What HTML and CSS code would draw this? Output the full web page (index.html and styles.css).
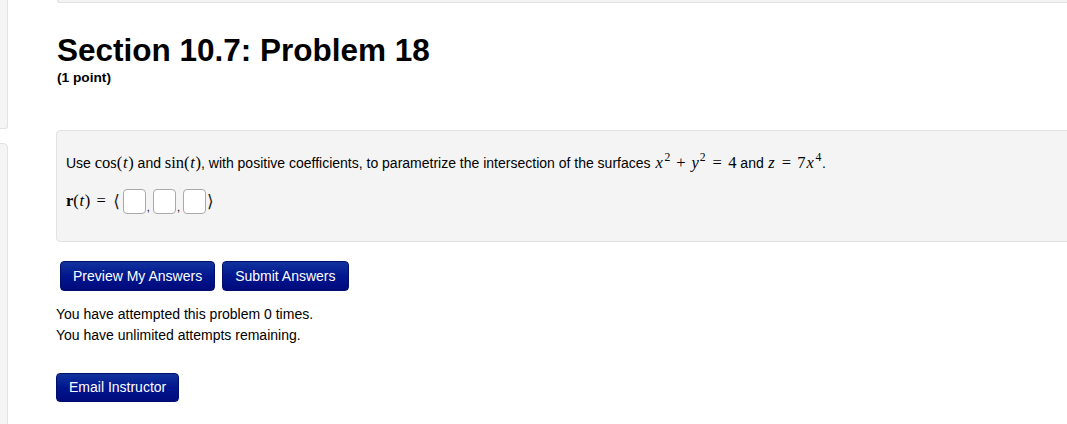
FILE: index.html
```html
<!DOCTYPE html>
<html lang="en">
<head>
<meta charset="utf-8">
<title>Section 10.7: Problem 18</title>
<link rel="stylesheet" href="styles.css">
</head>
<body>
<div class="page">
  <aside class="side">
    <div class="side-panel side-top"></div>
    <div class="side-panel side-bottom"></div>
  </aside>
  <main class="main">
    <div class="top-well"></div>
    <h1 class="title">Section 10.7: Problem 18</h1>
    <div class="points">(1 point)</div>

    <div class="problem">
      <p class="statement">Use <span class="m"><span class="rm">cos</span><span class="pa">(</span><i class="mi t">t</i><span class="pa">)</span></span> and <span class="m"><span class="rm">sin</span><span class="pa">(</span><i class="mi t">t</i><span class="pa">)</span></span>, with positive coefficients, to parametrize the intersection of the surfaces <span class="m"><i class="mi x">x</i><sup>2</sup><span class="bin">+</span><i class="mi y">y</i><sup>2</sup><span class="rel">=</span>4</span> and <span class="m"><i class="mi z">z</i><span class="rel">=</span>7<i class="mi x">x</i><sup>4</sup></span>.</p>
      <div class="answer-row">
        <span class="m"><b class="bold">r</b><span class="pa">(</span><i class="mi t">t</i><span class="pa">)</span><span class="rel">=</span></span><span class="angle">⟨</span><span class="ans"></span><span class="comma">,</span><span class="ans"></span><span class="comma">,</span><span class="ans"></span><span class="angle">⟩</span>
      </div>
    </div>

    <div class="submit-row">
      <button class="btn">Preview My Answers</button>
      <button class="btn">Submit Answers</button>
    </div>

    <div class="attempts">
      <div>You have attempted this problem 0 times.</div>
      <div>You have unlimited attempts remaining.</div>
    </div>

    <button class="btn email">Email Instructor</button>
  </main>
</div>
</body>
</html>
```

FILE: styles.css
```css
html, body {
  margin: 0;
  padding: 0;
  background: #ffffff;
  overflow: hidden;
}
body {
  font-family: "Liberation Sans", Arial, sans-serif;
  font-size: 14px;
  line-height: 20px;
  color: #000;
  height: 424px;
}
.page {
  display: flex;
  height: 424px;
}
.side {
  width: 8px;
  flex: none;
  display: flex;
  flex-direction: column;
  gap: 14px;
}
.side-panel {
  background: #f5f5f5;
  border: 1px solid #e3e3e3;
  border-left: none;
  box-sizing: border-box;
}
.side-top {
  height: 129px;
  border-top: none;
  border-radius: 0 0 3px 0;
}
.side-bottom {
  flex: 1;
  border-bottom: none;
  border-radius: 0 5px 0 0;
}
.main {
  flex: 1;
  min-width: 0;
  padding-left: 48px;
}
.top-well {
  height: 3px;
  margin-left: 1px;
  margin-right: -10px;
  background: #f3f3f3;
  border-bottom: 1px solid #e0e0e0;
  border-left: 1px solid #e0e0e0;
  border-radius: 0 0 0 4px;
  box-sizing: border-box;
}
.title {
  font-size: 31.5px;
  line-height: 36px;
  font-weight: bold;
  margin: 29px 0 0 1px;
}
.points {
  font-size: 13.7px;
  font-weight: bold;
  line-height: 17px;
  margin: 1px 0 0 1px;
}
.problem {
  margin-top: 44px;
  margin-right: -10px;
  background: #f4f4f4;
  border: 1px solid #e2e2e2;
  border-radius: 4px;
  padding: 22px 9px 27px;
}
.statement {
  margin: 0;
  line-height: 20px;
}
.m {
  font-family: "Liberation Serif", "DejaVu Serif", serif;
  font-size: 16.5px;
  line-height: 1;
  white-space: nowrap;
}
.mi {
  display: inline-block;
  font-style: italic;
  text-align: center;
}
.mi.t { width: 0.36em; }
.mi.x { width: 0.57em; }
.mi.y { width: 0.5em; }
.mi.z { width: 0.47em; }
.pa {
  display: inline-block;
  width: 0.333em;
  text-align: center;
}
.bin {
  display: inline-block;
  width: 0.778em;
  margin: 0 0.222em;
  text-align: center;
}
.rel {
  display: inline-block;
  width: 0.778em;
  margin: 0 0.278em;
  text-align: center;
}
.m sup {
  font-size: 11.7px;
  vertical-align: 7px;
  line-height: 0;
  padding: 0 0.05em 0 0.05em;
}
.rm {
  font-style: normal;
}
.answer-row {
  margin-top: 16px;
  display: flex;
  align-items: center;
  height: 25px;
}
.bold {
  font-weight: bold;
}
.angle {
  font-family: "DejaVu Sans", sans-serif;
  font-size: 17px;
  line-height: 1;
  color: #222;
  margin: 0 3px 0 1px;
}
.ans {
  width: 23px;
  height: 25px;
  box-sizing: border-box;
  background: #fff;
  border: 1px solid #a9a9a9;
  border-radius: 4px;
}
.comma {
  align-self: flex-end;
  font-size: 11px;
  line-height: 14px;
  margin: 0 3px 0 1px;
}
.submit-row {
  margin-top: 19px;
  margin-left: 4px;
  display: flex;
  gap: 7px;
}
.btn {
  font-family: "Liberation Sans", Arial, sans-serif;
  font-size: 14px;
  line-height: 20px;
  color: #fff;
  padding: 4px 12px;
  border: 1px solid #00106a;
  border-radius: 4px;
  background: linear-gradient(to bottom, #11339d 0%, #01168e 50%, #000a7c 100%);
  cursor: pointer;
}
.attempts {
  margin-top: 13px;
  line-height: 21px;
}
.email {
  margin-top: 27px;
  padding: 3px 12px 4px;
}
```
